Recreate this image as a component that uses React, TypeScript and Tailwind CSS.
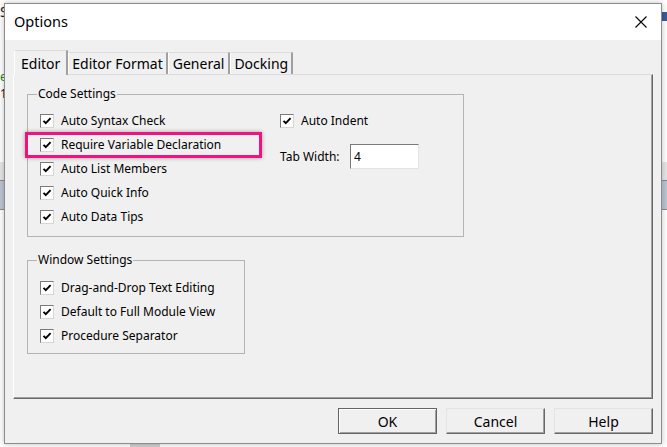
import React from "react";

const Check = () => (
  <span className="w-[14px] h-[14px] shrink-0 bg-white border border-t-[#7a7a7a] border-l-[#7a7a7a] border-r-[#d6d6d6] border-b-[#d6d6d6] flex items-center justify-center">
    <svg width="10" height="10" viewBox="0 0 10 10">
      <path d="M1.5 4.8 L3.8 7.2 L8.6 2.2" stroke="#000" strokeWidth="1.9" fill="none" />
    </svg>
  </span>
);

const CheckRow = ({ label }: { label: string }) => (
  <div className="flex items-center h-[24px] gap-[7px]">
    <Check />
    <span>{label}</span>
  </div>
);

const Tab = ({ label, active, pad }: { label: string; active?: boolean; pad: string }) => (
  <div
    className={`flex items-center border-t border-l border-t-[#dcdcdc] border-l-white border-r-2 border-r-[#a0a0a0] bg-[#f0f0f0] ${pad} ${
      active ? "h-[25px] -mb-[1px] relative z-10" : "h-[22px]"
    }`}
  >
    {label}
  </div>
);

const Button = ({ label, primary }: { label: string; primary?: boolean }) => (
  <div
    className={`w-[99px] h-[26px] flex items-center justify-center bg-[#f0f0f0] border ${
      primary
        ? "border-[#646464] shadow-[inset_1px_1px_0_#fff,inset_-1px_-1px_0_#a0a0a0]"
        : "border-t-[#e3e3e3] border-l-[#e3e3e3] border-r-[#696969] border-b-[#696969] shadow-[inset_-1px_-1px_0_#a0a0a0]"
    }`}
  >
    {label}
  </div>
);

export default function App() {
  return (
    <div className="relative w-[667px] h-[447px] overflow-hidden bg-white font-['Noto_Sans',sans-serif] text-black">
      {/* desktop bits behind the dialog */}
      <div className="absolute left-0 top-[5px] text-[14px] leading-none text-[#222]">S</div>
      <div className="absolute left-0 top-[71px] text-[12px] leading-none text-[#1a8a1a]">e</div>
      <div className="absolute left-0 top-[88px] text-[12px] leading-none text-[#222]">1</div>
      <div className="absolute left-0 top-[162px] w-[667px] h-[18px] bg-[#e6e6e6]" />
      <div className="absolute left-0 top-[180px] w-[667px] h-[30px] bg-[#bcc5d3] border-t border-[#8a8a8a] border-b" />
      <div className="absolute right-0 top-[12px] w-[5px] h-[9px] bg-[#3a5a9a]" />
      <div className="absolute left-[130px] top-[443px] w-[30px] h-[4px] bg-[#d0d0d0]" />

      {/* dialog */}
      <div className="absolute left-[4px] top-[3px] w-[658px] h-[441px] flex flex-col border border-[#8c8c8c] bg-[#f0f0f0] shadow-[0_0_6px_rgba(0,0,0,0.25)]">
        <div className="h-[36px] bg-white flex items-center justify-between pl-[9px] pr-[13px]">
          <span className="text-[14.5px]">Options</span>
          <svg width="14" height="14" viewBox="0 0 14 14">
            <path d="M1.5 1.5 L12.5 12.5 M12.5 1.5 L1.5 12.5" stroke="#000" strokeWidth="1.1" />
          </svg>
        </div>

        <div className="flex-1 flex flex-col px-[8px] pt-[10px]">
          <div className="flex items-end h-[24px] pl-[1px] text-[14px]">
            <Tab label="Editor" active pad="px-[6px]" />
            <Tab label="Editor Format" pad="px-[3px]" />
            <Tab label="General" pad="px-[4px]" />
            <Tab label="Docking" pad="px-[3px]" />
          </div>

          <div className="h-[325px] border border-t-[#dcdcdc] border-l-white border-r-[#696969] border-b-[#696969] shadow-[inset_-1px_-1px_0_#a0a0a0] pl-[13px] pt-[11px] text-[12px]">
            <fieldset className="w-[437px] h-[151px] border border-[#b4b4b4]">
              <legend className="ml-[9px] px-[1px] leading-[16px]">Code Settings</legend>
              <div className="flex pt-[7px] pl-[12px]">
                <div className="w-[240px] flex flex-col">
                  <CheckRow label="Auto Syntax Check" />
                  <CheckRow label="Require Variable Declaration" />
                  <CheckRow label="Auto List Members" />
                  <CheckRow label="Auto Quick Info" />
                  <CheckRow label="Auto Data Tips" />
                </div>
                <div className="flex flex-col">
                  <CheckRow label="Auto Indent" />
                  <div className="flex items-center h-[25px] mt-[11px] gap-[9px]">
                    <span className="w-[61px]">Tab Width:</span>
                    <div className="w-[69px] h-[25px] bg-white border border-t-[#7a7a7a] border-l-[#7a7a7a] border-r-[#e3e3e3] border-b-[#e3e3e3] flex items-center pl-[3px]">
                      4
                    </div>
                  </div>
                </div>
              </div>
            </fieldset>

            <fieldset className="w-[218px] h-[102px] mt-[15px] border border-[#b4b4b4]">
              <legend className="ml-[9px] px-[1px] leading-[16px]">Window Settings</legend>
              <div className="flex flex-col pt-[8px] pl-[12px]">
                <CheckRow label="Drag-and-Drop Text Editing" />
                <CheckRow label="Default to Full Module View" />
                <CheckRow label="Procedure Separator" />
              </div>
            </fieldset>
          </div>

          <div className="flex justify-end gap-[9px] pt-[9px] text-[14px]">
            <Button label="OK" primary />
            <Button label="Cancel" />
            <Button label="Help" />
          </div>
        </div>
      </div>

      {/* highlight annotation */}
      <div className="absolute left-[25px] top-[132px] w-[237px] h-[26px] border-[3px] border-[#f2127f] shadow-[0_0_4px_rgba(0,0,0,0.35)]" />
    </div>
  );
}
